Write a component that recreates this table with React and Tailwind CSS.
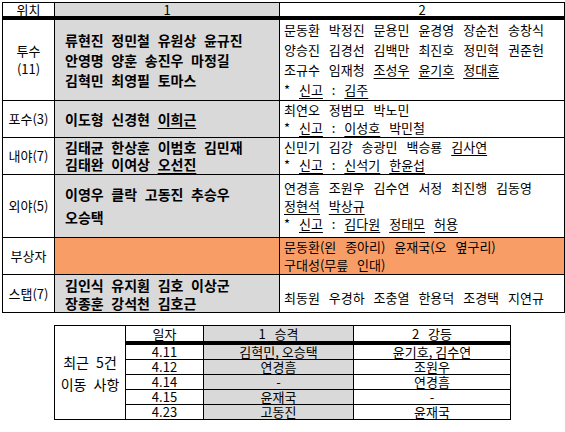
import React from 'react';

const U = ({ children }) => <span className="underline underline-offset-[3px]">{children}</span>;

// base cell styles carry no leading / valign so every cell sets its own without clashes
const cell = 'border border-black p-0';
const c1 = `${cell} align-middle text-center text-[13px] leading-[18px]`;
const c2 = `${cell} align-middle bg-[#d9d9d9] pl-[10px] text-[14px] font-bold [word-spacing:4.5px]`;
const c3 = `${cell} pl-[4px] text-[13px] [word-spacing:6px] whitespace-nowrap`;

const moves = [
    ['4.11', '김혁민, 오승택', '윤기호, 김수연'],
    ['4.12', '연경흠', '조원우'],
    ['4.14', '-', '연경흠'],
    ['4.15', '윤재국', '-'],
    ['4.23', '고동진', '윤재국'],
];

export default function App() {
    return (
        <div className="w-[565px] h-[432px] bg-white text-black pt-[2px] pl-[2px] font-['Noto_Sans_CJK_KR','Noto_Sans',sans-serif]">

            {/* ROSTER TABLE */}
            <table className="border-collapse table-fixed w-[562px]">
                <colgroup>
                    <col className="w-[52px]" />
                    <col className="w-[225px]" />
                    <col className="w-[285px]" />
                </colgroup>
                <tbody>
                    <tr className="h-[14px]">
                        <td className={`${cell} align-middle text-center text-[13px] leading-[13px]`}>위치</td>
                        <td className={`${cell} align-middle bg-[#d9d9d9] text-center text-[13px] leading-[13px]`}>1</td>
                        <td className={`${cell} align-middle text-center text-[13px] leading-[13px]`}>2</td>
                    </tr>
                    <tr className="h-[1px]">
                        <td colSpan={3} className="p-0 h-[1px] leading-none text-[1px] border-x border-black border-b-[3px]" />
                    </tr>

                    <tr className="h-[80px]">
                        <td className={c1}>투수<br />(11)</td>
                        <td className={`${c2} leading-[20px]`}>
                            류현진 정민철 유원상 윤규진<br />
                            안영명 양훈 송진우 마정길<br />
                            김혁민 최영필 토마스
                        </td>
                        <td className={`${c3} align-middle leading-[20px]`}>
                            문동환 박정진 문용민 윤경영 장순천 송창식<br />
                            양승진 김경선 김백만 최진호 정민혁 권준헌<br />
                            조규수 임재청 <U>조성우</U> <U>윤기호</U> <U>정대훈</U><br />
                            * <U>신고</U> : <U>김주</U>
                        </td>
                    </tr>

                    <tr className="h-[36px]">
                        <td className={c1}>포수(3)</td>
                        <td className={`${c2} leading-[20px]`}>이도형 신경현 <U>이희근</U></td>
                        <td className={`${c3} align-middle leading-[18px]`}>
                            최연오 정범모 박노민<br />
                            * <U>신고</U> : <U>이성호</U> 박민철
                        </td>
                    </tr>

                    <tr className="h-[36px]">
                        <td className={c1}>내야(7)</td>
                        <td className={`${c2} leading-[17px]`}>
                            김태균 한상훈 이범호 김민재<br />
                            김태완 이여상 <U>오선진</U>
                        </td>
                        <td className={`${c3} align-middle leading-[18px]`}>
                            신민기 김강 송광민 백승룡 <U>김사연</U><br />
                            * <U>신고</U> : <U>신석기</U> <U>한윤섭</U>
                        </td>
                    </tr>

                    <tr className="h-[63px]">
                        <td className={c1}>외야(5)</td>
                        <td className={`${c2} leading-[23px]`}>
                            이영우 클락 고동진 추승우<br />
                            오승택
                        </td>
                        <td className={`${c3} align-middle leading-[18px]`}>
                            연경흠 조원우 김수연 서정 최진행 김동영<br />
                            <U>정현석</U> <U>박상규</U><br />
                            * <U>신고</U> : <U>김다원</U> <U>정태모</U> <U>허용</U>
                        </td>
                    </tr>

                    <tr className="h-[36px]">
                        <td className={c1}>부상자</td>
                        <td className={`${cell} bg-[#f99d67]`} />
                        <td className={`${c3} align-middle leading-[18px] bg-[#f99d67]`}>
                            문동환(왼 종아리) 윤재국(오 옆구리)<br />
                            구대성(무릎 인대)
                        </td>
                    </tr>

                    <tr className="h-[38px]">
                        <td className={c1}>스탭(7)</td>
                        <td className={`${c2} leading-[18px]`}>
                            김인식 유지훤 김호 이상군<br />
                            장종훈 강석천 김호근
                        </td>
                        <td className={`${c3} align-bottom leading-[18px] pb-[5px]`}>
                            최동원 우경하 조충열 한용덕 조경택 지연규
                        </td>
                    </tr>
                </tbody>
            </table>

            {/* RECENT MOVES */}
            <table className="border-collapse table-fixed w-[456px] ml-[52px] mt-[12px] text-[13px] text-center">
                <colgroup>
                    <col className="w-[71px]" />
                    <col className="w-[78px]" />
                    <col className="w-[150px]" />
                    <col className="w-[157px]" />
                </colgroup>
                <tbody>
                    <tr className="h-[16px]">
                        <td rowSpan={7} className={`${cell} align-middle text-[14px] leading-[22px] [word-spacing:4px]`}>최근 5건<br />이동 사항</td>
                        <td className={`${cell} align-middle leading-[14px]`}>일자</td>
                        <td className={`${cell} align-middle bg-[#d9d9d9] leading-[14px] [word-spacing:6px]`}>1 승격</td>
                        <td className={`${cell} align-middle leading-[14px] [word-spacing:6px]`}>2 강등</td>
                    </tr>
                    <tr className="h-[1px]">
                        <td colSpan={3} className="p-0 h-[1px] leading-none text-[1px] border-r border-black border-b-[3px]" />
                    </tr>
                    {moves.map(([d, up, down]) => (
                        <tr key={d} className="h-[15px]">
                            <td className={`${cell} align-middle leading-[14px]`}>{d}</td>
                            <td className={`${cell} align-middle bg-[#d9d9d9] leading-[14px]`}>{up}</td>
                            <td className={`${cell} align-middle leading-[14px]`}>{down}</td>
                        </tr>
                    ))}
                </tbody>
            </table>
        </div>
    );
}
